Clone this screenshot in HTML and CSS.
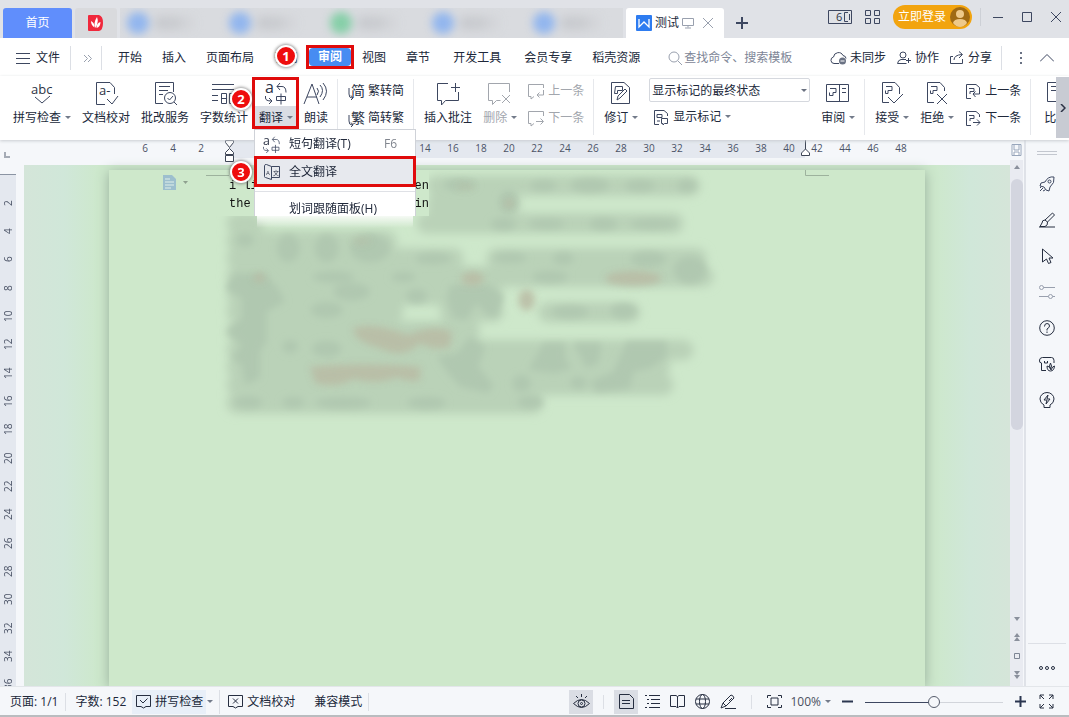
FILE: index.html
```html
<!DOCTYPE html>
<html lang="zh-CN">
<head>
    <meta charset="UTF-8">
    <meta name="viewport" content="width=device-width, initial-scale=1.0">
    <title>测试</title>
    <link rel="stylesheet" href="styles.css">
</head>
<body>
    <header class="titlebar">
        <button class="home-tab">首页</button>
        <button class="docer-tab" aria-label="稻壳">
            <svg width="16" height="16" viewBox="0 0 16 16"><path d="M1 0h10q4 1 4 8t-4 8H1q-1 0-1-1V1q0-1 1-1z" fill="#f0283c"/><path d="M7.500 13Q5 8 9 2q2 5-1.500 11zM6.500 12.500Q3 10 3 6q4 2 3.500 6.500zM8.500 13q0-5 4-6 0 5-4 6z" fill="#fff"/></svg>
        </button>
        <div class="other-tabs">
            <i class="dot"></i><i class="dot"></i><i class="dot green"></i><i class="dot"></i><i class="dot"></i>
        </div>
        <div class="doc-tab">
            <svg width="16" height="16" viewBox="0 0 16 16"><rect width="16" height="16" rx="1" fill="#2e7cf0"/><path d="M3 4v8l5-5 5 5V4" fill="none" stroke="#fff" stroke-width="1.3"/></svg>
            <span>测试</span>
            <svg class="line light" width="12" height="12" viewBox="0 0 12 12"><path d="M.5 1.500h11v7H.5zM6 8.500v2M3 11h6"/></svg>
            <button class="close-tab" aria-label="关闭"><svg class="line light" width="12" height="12" viewBox="0 0 12 12"><path d="M1 1l10 10M11 1L1 11"/></svg></button>
        </div>
        <button class="new-tab" aria-label="新建"><svg width="12" height="12" viewBox="0 0 12 12"><path d="M6 0v12M0 6h12" stroke="#3d4760" stroke-width="2"/></svg></button>
        <div class="window-tools">
            <svg class="line" width="24" height="14" viewBox="0 0 24 14"><path d="M14 .5H.5v13H14M14 .5h9.500v13H14M20 2.500h-3.500v9H20M21.500 4v6"/><text x="8" y="11" class="glyph">6</text></svg>
            <svg class="line" width="15" height="14" viewBox="0 0 15 14"><path d="M.5.5h5v5h-5zM9.500.5h5v5h-5zM.5 8.500h5v5h-5zM9.500 8.500h5v5h-5z"/></svg>
            <button class="login">立即登录
                <svg width="20" height="20" viewBox="0 0 20 20"><circle cx="10" cy="10" r="10" fill="#a06a14"/><circle cx="10" cy="7" r="4" fill="#eec98a"/><path d="M3 16q1-4 7-4t7 4q-3 4-7 4t-7-4z" fill="#eec98a"/></svg>
            </button>
            <i class="rule"></i>
            <button aria-label="最小化"><svg class="line" width="12" height="12" viewBox="0 0 12 12"><path d="M1 6.500h10"/></svg></button>
            <button aria-label="最大化"><svg class="line" width="12" height="12" viewBox="0 0 12 12"><path d="M1.500 1.500h9v9h-9z"/></svg></button>
            <button aria-label="关闭窗口"><svg class="line" width="12" height="12" viewBox="0 0 12 12"><path d="M1 1l10 10M11 1L1 11"/></svg></button>
        </div>
    </header>

    <nav class="menubar">
        <button class="file"><svg class="line" width="14" height="11" viewBox="0 0 14 11"><path d="M0 .5h14M0 5.500h14M0 10.500h14"/></svg>文件</button>
        <button class="more" aria-label="更多"><svg class="line light" width="9" height="9" viewBox="0 0 9 9"><path d="M1 1l3.500 3.500L1 8M5 1l3.500 3.500L5 8"/></svg></button>
        <div class="tabs">
            <button>开始</button>
            <button>插入</button>
            <button>页面布局</button>
            <button class="marked">引用<b class="badge badge-1">1</b></button>
            <button class="active"><span>审阅</span></button>
            <button>视图</button>
            <button>章节</button>
            <button class="wide">开发工具</button>
            <button class="wide">会员专享</button>
            <button>稻壳资源</button>
        </div>
        <label class="search">
            <svg class="line light" width="14" height="14" viewBox="0 0 14 14"><circle cx="6" cy="6" r="5"/><path d="M10 10l4 4"/></svg>
            <input type="text" placeholder="查找命令、搜索模板" aria-label="搜索">
        </label>
        <div class="share">
            <button><svg class="line" width="17" height="14" viewBox="0 0 17 14"><path d="M9 12.500H4a3.300 3.300 0 0 1-.5-6.500 5 5 0 0 1 9.500-1.500q3 .5 3 3"/><circle cx="12.500" cy="10" r="3.500" fill="#6a7284" stroke="none"/><path d="M10.500 10h4" stroke="#fff"/></svg>未同步</button>
            <button><svg class="line" width="15" height="14" viewBox="0 0 15 14"><circle cx="6" cy="4" r="3"/><path d="M9 8.500H4Q1 9 .5 12.500h9M9 9.500h5M11.500 7v5"/></svg>协作</button>
            <button><svg class="line" width="15" height="14" viewBox="0 0 15 14"><path d="M3 5.500H.5v7h12V8M4 9q0-5 8-5.500M9 .5l3.500 3L9 7"/></svg>分享</button>
            <i class="rule"></i>
            <button aria-label="选项"><svg width="4" height="12" viewBox="0 0 4 12" fill="#6a7284"><path d="M1 0h2v2H1zM1 5h2v2H1zM1 10h2v2H1z"/></svg></button>
            <button aria-label="折叠"><svg class="line" width="14" height="8" viewBox="0 0 14 8"><path d="M0 7.500l7-7 7 7"/></svg></button>
        </div>
    </nav>

    <section class="ribbon">
        <div class="tools">
            <button class="tool"><svg class="line" width="28" height="26" viewBox="0 0 28 26"><text x="3" y="14" class="glyph abc">abc</text><path d="M7 17l7 6 8-7"/></svg><span class="drop">拼写检查</span></button>
            <button class="tool"><svg class="line" width="28" height="26" viewBox="0 0 28 26"><path d="M13 24.500H4.500v-22H18l4.500 5V14M15 19l5 5 6-8"/><text x="7" y="15" class="glyph abc">a-</text></svg><span>文档校对</span></button>
            <button class="tool"><svg class="line" width="28" height="26" viewBox="0 0 28 26"><path d="M12 23.500H4.500v-21h18V12M8 6.500h11M8 10.500h9M8 14.500h4M16.500 18l2 2 3.500-4M23 22l3 3"/><circle cx="19" cy="18" r="5.500"/></svg><span>批改服务</span></button>
            <button class="tool"><svg class="line" width="28" height="26" viewBox="0 0 28 26"><path d="M2 4.500h22M2 9.500h22M2 15.500h6M2 20.500h6M11.500 13.500h5v10h-5zM11.500 18.500h5M19.500 13.500h6v10h-6zM19.500 18.500h6"/></svg><span>字数统计</span></button>
            <div class="translate">
                <button class="tool"><svg class="line" width="28" height="26" viewBox="0 0 28 26"><use href="#trans"/></svg><span class="drop">翻译</span></button>
                <i class="frame"></i>
                <b class="badge badge-2">2</b>
                <div class="dropdown">
                    <button><svg class="line" width="18" height="17" viewBox="3 2 23 22"><use href="#trans" width="28" height="26"/></svg><span>短句翻译(T)</span><kbd>F6</kbd></button>
                    <button class="current"><svg class="line" width="16" height="16" viewBox="0 0 16 16"><path d="M7.500 2.500l-5-2q-2 0-2 1v11q0 1 1 1l6 2zM7.500 2.500h8v11h-8"/><text x="2" y="11" class="glyph tiny">A</text><text x="9" y="11" class="glyph tiny">文</text></svg><span>全文翻译</span></button>
                    <hr>
                    <button><span>划词跟随面板(H)</span></button>
                    <b class="badge badge-3">3</b>
                </div>
            </div>
            <button class="tool"><svg class="line" width="28" height="26" viewBox="0 0 28 26"><path d="M2 24L10 4l7 20M5 17h10M15 8q3 3 0 7M18 5q5 5 0 12M21 3q7 8 0 17"/></svg><span>朗读</span></button>
            <i class="rule"></i>
            <div class="stack">
                <button><svg class="line" width="17" height="17" viewBox="0 0 17 17"><text x="3" y="13" class="glyph han">简</text><path d="M1 5v6q0 4 3 4M3 12.500l2 2.500-2 2"/></svg>繁转简</button>
                <button><svg class="line" width="17" height="17" viewBox="0 0 17 17"><text x="3" y="13" class="glyph han">繁</text><path d="M1 5v6q0 4 3 4M3 12.500l2 2.500-2 2"/></svg>简转繁</button>
            </div>
            <i class="rule"></i>
            <button class="tool"><svg class="line" width="28" height="26" viewBox="0 0 28 26"><path d="M14 3.500H3.500v17h4V25l4-4.500h13V12M17 7.500h9M21.500 3v9"/></svg><span>插入批注</span></button>
            <button class="tool off"><svg class="line" width="28" height="26" viewBox="0 0 28 26"><path d="M23.500 12V3.500h-21v17h4v4l4-4h4M16 15l8 8M24 15l-8 8"/></svg><span class="drop">删除</span></button>
            <div class="stack off">
                <button><svg class="line" width="17" height="17" viewBox="0 0 17 17"><path d="M15.500 5V1.500H.5v12H3V16l3-2.500M15.500 7v5H9M11.500 9.500L9 12l2.500 2.500"/></svg>上一条</button>
                <button><svg class="line" width="17" height="17" viewBox="0 0 17 17"><path d="M15.500 6V1.500H.5v12H3V16l3-2.500M8 11.500h7M12.500 8.500l3 3-3 3"/></svg>下一条</button>
            </div>
            <i class="rule"></i>
            <button class="tool"><svg class="line" width="28" height="26" viewBox="0 0 28 26"><path d="M4.500 2.500H17l5.500 5v16h-18zM8.500 6.500h7v4h-5v3h-3zM10 20l1-4 7-7 2 2-7 7z"/></svg><span class="drop">修订</span></button>
            <div class="stack view">
                <div class="select-wrap">
                    <select aria-label="显示状态"><option>显示标记的最终状态</option></select>
                </div>
                <button><svg class="line" width="17" height="17" viewBox="0 0 17 17"><path d="M6 15.500H1.500v-14H11l3.500 3V7M4 5.500h5v3H4zM4 12h3M8.500 9.500h6v5h-3L10 16v-1.500H8.500z"/></svg><span class="drop">显示标记</span></button>
            </div>
            <button class="tool"><svg class="line" width="28" height="26" viewBox="0 0 28 26"><path d="M2.500 4.500h22v17h-22zM15.500 4.500v17M6 8.500h6v4H9v3H5.500v-3M18 8.500h4M18 12.500h4"/></svg><span class="drop">审阅</span></button>
            <i class="rule"></i>
            <button class="tool"><svg class="line" width="28" height="26" viewBox="0 0 28 26"><path d="M11 22.500H4.500v-20H17l4.500 5V14M8 6.500h6v4h-4v3H7.500v-3M10 17l6 6 9-9"/></svg><span class="drop">接受</span></button>
            <button class="tool"><svg class="line" width="28" height="26" viewBox="0 0 28 26"><path d="M11 22.500H4.500v-20H17l4.500 5V11M8 6.500h6v4h-4v3H7.500v-3M14 14l10 10M24 14L14 24"/></svg><span class="drop">拒绝</span></button>
            <div class="stack">
                <button><svg class="line" width="17" height="17" viewBox="0 0 17 17"><path d="M6 15.500H1.500v-14H11l3.500 3V11H8M10.500 8.500L8 11l2.500 3M4 5.500h5v3H5V11"/></svg>上一条</button>
                <button><svg class="line" width="17" height="17" viewBox="0 0 17 17"><path d="M6 15.500H1.500v-14H11l3.500 3V7M4 5.500h5v3H5V11M8 12.500h7M12 9.500l3 3-3 3"/></svg>下一条</button>
            </div>
            <i class="rule"></i>
            <button class="tool last-tool"><svg class="line" width="28" height="26" viewBox="0 0 28 26"><path d="M24 21.500H.5v-19H24M4 6.500h10M4 10.500h10"/></svg><span class="drop">比较</span></button>
        </div>
        <button class="scroll-right" aria-label="向右滚动"><svg width="6" height="8" viewBox="0 0 6 8"><path d="M1 0l4 4-4 4" fill="none" stroke="#2b3245" stroke-width="1.500"/></svg></button>
    </section>

    <main class="workspace">
        <div class="v-ruler">
            <div class="corner"><svg width="6" height="6" viewBox="0 0 6 6"><path d="M1 0v5h5" fill="none" stroke="#a5abb5" stroke-width="2"/></svg></div>
            <div class="v-numbers">
                <span>2</span><span>4</span><span>6</span><span>8</span><span>10</span><span>12</span><span>14</span><span>16</span><span>18</span><span>20</span><span>22</span><span>24</span><span>26</span><span>28</span><span>30</span><span>32</span><span>34</span><span>36</span>
            </div>
        </div>
        <div class="editor">
            <div class="h-ruler">
                <span>6</span><span>4</span><span>2</span><span></span><span>2</span><span>4</span><span>6</span><span>8</span><span>10</span><span>12</span><span>14</span><span>16</span><span>18</span><span>20</span><span>22</span><span>24</span><span>26</span><span>28</span><span>30</span><span>32</span><span>34</span><span>36</span><span>38</span><span>40</span><span>42</span><span>44</span><span>46</span><span>48</span>
                <svg class="indent first" width="11" height="22" viewBox="0 0 11 22"><path d="M1.500.5h8v2l-4 5-4-5zM5.500 8.500l4 4v2h-8v-2zM1.500 15.500h8v6h-8z"/></svg>
                <svg class="indent last" width="11" height="16" viewBox="0 0 11 16"><path d="M5.500 0v9l-4 4v2.500h8V13l-4-4"/></svg>
            </div>
            <div class="canvas">
                <article class="page">
                    <svg class="smudge" width="816" height="260" viewBox="0 0 816 260">
                        <defs>
                            <filter id="soft" x="-10%" y="-10%" width="120%" height="120%"><feGaussianBlur stdDeviation="14"/></filter>
                            <filter id="fine" x="-10%" y="-10%" width="120%" height="120%"><feGaussianBlur stdDeviation="11"/></filter>
                            <clipPath id="below"><path d="M627 0H1600V780H-60V138H627z"/></clipPath>
                        </defs>
                        <path d="M97 5.500h23M696.500 0v5.500H720" fill="none" stroke="#9db29d"/>
                        <path d="M54 5h9l4 4v11H54z" fill="#9dbfce"/>
                        <path d="M56 9h5M56 12h9M56 15h9M56 18h6" stroke="#e2f1ea"/>
                        <path d="M74 11h5l-2.500 3z" fill="#8fa08f"/>
                        <g transform="translate(111 0) scale(.3333)" clip-path="url(#below)">
                            <g filter="url(#soft)" fill="none" stroke="#bad2b8" stroke-width="62" stroke-linecap="round">
                                <path d="M650 47H1410M650 103H870M620 160H1360M50 160H100M50 213H500M50 265H700M830 265H1430M50 320H1450M50 375H820M50 425H520M690 425H820M985 427H1230M50 483H750M50 540H1390M50 592H1320M50 645H1330M50 700H940"/>
                            </g>
                            <g filter="url(#fine)" fill="#b0c8b0">
                                <ellipse cx="720" cy="45" rx="50" ry="18"/><ellipse cx="970" cy="47" rx="40" ry="15"/><ellipse cx="1110" cy="46" rx="58" ry="20"/><ellipse cx="1260" cy="47" rx="45" ry="16"/><ellipse cx="1400" cy="47" rx="28" ry="18"/>
                                <ellipse cx="865" cy="95" rx="28" ry="34"/><ellipse cx="850" cy="162" rx="38" ry="18"/><ellipse cx="980" cy="162" rx="55" ry="14"/><ellipse cx="1150" cy="162" rx="42" ry="17"/><ellipse cx="1300" cy="162" rx="70" ry="14"/>
                                <ellipse cx="75" cy="210" rx="26" ry="20"/><ellipse cx="205" cy="235" rx="34" ry="42"/><ellipse cx="320" cy="235" rx="36" ry="42"/><ellipse cx="450" cy="235" rx="60" ry="42"/>
                                <ellipse cx="640" cy="266" rx="54" ry="17"/><ellipse cx="870" cy="264" rx="50" ry="15"/><ellipse cx="1030" cy="266" rx="32" ry="18"/><ellipse cx="1285" cy="268" rx="54" ry="22"/><ellipse cx="1410" cy="300" rx="48" ry="40"/>
                                <path d="M45 310h90l40 45 20 40-55 30v90l-20 30v80l-45 20-10-60-30-20 30-40-45-40 45-40v-60l-50-30z"/>
                                <ellipse cx="340" cy="321" rx="62" ry="18"/><ellipse cx="550" cy="321" rx="36" ry="16"/><ellipse cx="395" cy="365" rx="55" ry="27"/><ellipse cx="320" cy="420" rx="48" ry="24"/><ellipse cx="590" cy="378" rx="32" ry="22"/><ellipse cx="990" cy="320" rx="54" ry="18"/>
                                <path d="M690 345h120l40 35-20 60-30-5-30-35-30 50-40-5-20-60z"/>
                                <ellipse cx="1050" cy="426" rx="56" ry="18"/><ellipse cx="1210" cy="424" rx="38" ry="21"/><ellipse cx="320" cy="537" rx="44" ry="25"/><ellipse cx="210" cy="530" rx="24" ry="20"/>
                                <path d="M650 560l60-10 40-50 45 30-20 60 45 55-15 25-85-20-40-45z"/>
                                <path d="M970 520h65v45l20 30-50 15-80-10zM1060 520h85l-10 60-35 15zM1220 515h120v45l-50 35-50 10-10 50-100 10-20-30 70-30z"/>
                                <ellipse cx="905" cy="640" rx="28" ry="26"/><ellipse cx="1075" cy="638" rx="25" ry="18"/><ellipse cx="85" cy="697" rx="42" ry="18"/><ellipse cx="220" cy="697" rx="34" ry="16"/><ellipse cx="370" cy="698" rx="84" ry="17"/><ellipse cx="620" cy="698" rx="58" ry="18"/><ellipse cx="930" cy="696" rx="38" ry="18"/>
                            </g>
                            <g filter="url(#fine)" fill="#b9bba4" opacity=".85">
                                <ellipse cx="735" cy="50" rx="28" ry="9" opacity=".5"/><ellipse cx="867" cy="100" rx="14" ry="11"/><ellipse cx="425" cy="213" rx="28" ry="10" opacity=".5"/><ellipse cx="118" cy="323" rx="17" ry="13"/>
                                <ellipse cx="758" cy="326" rx="34" ry="21"/><ellipse cx="1240" cy="325" rx="84" ry="22"/><ellipse cx="920" cy="390" rx="25" ry="32"/>
                                <path d="M400 475q60-20 165 20 70-35 130-10l-5 45q-40 15-90-10-50 50-120 15-80-20-80-60z"/>
                                <path d="M270 590q160-15 330 0v40q-30 8-70-8-60 25-130 5-50 30-115 12z"/>
                            </g>
                        </g>
                    </svg>
                    <div class="text">
                        <p><span>i li</span><span>een</span></p>
                        <p><span>the</span><span>tin</span></p>
                        <p><span>i li</span><span>f&nbsp;</span></p>
                    </div>
                </article>
            </div>
        </div>
        <div class="scrollbar">
            <svg width="11" height="12" viewBox="0 0 11 12"><path d="M1 .5h9v11H1zM3 1v5h5V1M3 11V8h5v3" fill="#fff" stroke="#98a6bb"/></svg>
            <div class="track">
                <svg class="arrow" width="6" height="4" viewBox="0 0 6 4"><path d="M0 4l3-4 3 4z"/></svg>
                <div class="thumb"></div>
                <div class="jump">
                    <svg class="arrow" width="6" height="4" viewBox="0 0 6 4"><path d="M0 0l3 4 3-4z"/></svg>
                    <svg class="arrow" width="6" height="8" viewBox="0 0 6 8"><path d="M0 4l3-4 3 4zM0 8l3-4 3 4z"/></svg>
                    <svg width="6" height="6" viewBox="0 0 6 6"><path d="M.5.5h5v5h-5z" fill="none" stroke="#7d8594"/></svg>
                    <svg class="arrow" width="6" height="8" viewBox="0 0 6 8"><path d="M0 0l3 4 3-4zM0 4l3 4 3-4z"/></svg>
                </div>
            </div>
        </div>
        <aside class="sidebar">
            <i class="grip"></i>
            <button aria-label="快捷"><svg class="line" width="16" height="16" viewBox="0 0 16 16"><path d="M15 1q-6-1-9 5L2 7l-1 3 4 1 2 3 3 1 1-4q5-4 4-10zM4 12l-3 3M2 11l-1 1M6 14l-2 1"/><circle cx="10.500" cy="5.500" r="1.500"/></svg></button>
            <button aria-label="样式"><svg class="line dark" width="16" height="16" viewBox="0 0 16 16"><path d="M13.500 1l2 2-7 7-2.500-2zM6 8q-3 0-3 3l-2 3.500h5q3-1 2.500-4.500M0 15h16"/></svg></button>
            <button aria-label="选择"><svg class="line dark" width="16" height="16" viewBox="0 0 16 16"><path d="M3.500 1v13l4-3 2 4.500 2.500-1-2-4.500h4z"/></svg></button>
            <button aria-label="设置"><svg class="line light" width="16" height="16" viewBox="0 0 16 16"><circle cx="2.500" cy="3.500" r="2"/><circle cx="11.500" cy="12.500" r="2"/><path d="M4.500 3.500H16M0 12.500h9.500M13.500 12.500H16"/></svg></button>
            <button aria-label="帮助"><svg class="line dark" width="16" height="16" viewBox="0 0 16 16"><circle cx="8" cy="8" r="7.300"/><path d="M5.500 6.500q0-3 2.500-3t2.500 2.500Q10.500 7.500 8 9v1.500M8 11.500V13"/></svg></button>
            <button aria-label="稻壳商城"><svg class="line dark" width="16" height="16" viewBox="0 0 16 16"><path d="M2.500 7v7.500H7M2.500 7Q0 7 .5 4q.5-2.500 3-2.500h9q2.500 0 2.500 3V7M5.500 5v2h3V5M8 10q0 5 3.500 5t4-5q-2 0-3.500 4-1-4-4-4zM11.500 7q-2 3 0 6 2-3 0-6z"/></svg></button>
            <button aria-label="智能助手"><svg class="line dark" width="16" height="16" viewBox="0 0 16 16"><path d="M5 13q-4-2-4-6a7 6.500 0 0 1 14 0q0 4-4 6v2.500H5zM9 3L5 8h3l-1 4 4-5H8z"/></svg></button>
            <button class="dots" aria-label="更多"><svg class="line dark" width="16" height="6" viewBox="0 0 16 6"><circle cx="2" cy="3" r="1.500"/><circle cx="8" cy="3" r="1.500"/><circle cx="14" cy="3" r="1.500"/></svg></button>
        </aside>
    </main>

    <footer class="statusbar">
        <span class="cell">页面: 1/1</span>
        <span class="cell words">字数: 152</span>
        <button class="spell"><svg class="line dark" width="15" height="15" viewBox="0 0 15 15"><path d="M5 12.500H.5v-11h14v11H10L7.500 14 5 12.500M4 6l3 3 4.500-4.500"/></svg><span class="drop">拼写检查</span></button>
        <button class="proof"><svg class="line dark" width="15" height="15" viewBox="0 0 15 15"><path d="M5 12.500H.5v-11h14v11H10L7.500 14 5 12.500M5 4.500l5 5M10 4.500l-5 5"/></svg>文档校对</button>
        <span class="compat">兼容模式</span>
        <div class="views">
            <button class="on" aria-label="护眼模式"><svg class="line dark" width="17" height="17" viewBox="0 0 17 17"><path d="M.5 10.500q8-8 16 0-8 8-16 0zM8.500 1v3M3 3l2 2M14 3l-2 2"/><circle cx="8.500" cy="10.500" r="3.500"/><circle cx="8.500" cy="10.500" r="1"/></svg></button>
            <i class="rule"></i>
            <button class="on" aria-label="页面视图"><svg class="line dark" width="15" height="15" viewBox="0 0 15 15"><path d="M.5.5h10l4 4v10H.5zM3 6.500h8M3 9.500h8"/></svg></button>
            <button aria-label="大纲"><svg class="line dark" width="15" height="15" viewBox="0 0 15 15"><path d="M0 1.500h2M4 1.500h11M2 5.500h2M6 5.500h9M2 9.500h2M6 9.500h9M0 13.500h2M4 13.500h11"/></svg></button>
            <button aria-label="阅读版式"><svg class="line dark" width="15" height="15" viewBox="0 0 15 15"><path d="M6 12.500H.5v-11H6l1.500 1 1.500-1h5.500v11H9L7.500 14 6 12.500M7.500 2.500V14"/></svg></button>
            <button aria-label="Web版式"><svg class="line dark" width="15" height="15" viewBox="0 0 15 15"><circle cx="7.500" cy="7.500" r="7"/><ellipse cx="7.500" cy="7.500" rx="3" ry="7"/><path d="M1 5h13M1 10h13"/></svg></button>
            <button aria-label="写作模式"><svg class="line dark" width="17" height="15" viewBox="0 0 17 15"><path d="M1 14l2-5 8-8q2 0 3 3l-8 8zM3 9l3 3M5 14.500h11M9 7l3-3"/></svg></button>
        </div>
        <i class="rule"></i>
        <div class="zoom">
            <button aria-label="适合页面"><svg class="line dark" width="15" height="15" viewBox="0 0 15 15"><path d="M.5 4V1.500H4M11 1.500h3.500V4M.5 11v2.500H4M11 13.500h3.500V11M4 4h7v7H4z"/></svg></button>
            <button class="drop">100%</button>
            <button class="minus" aria-label="缩小"><svg width="11" height="11" viewBox="0 0 11 11"><path d="M0 5.500h11" stroke="#2b3650" stroke-width="2"/></svg></button>
            <input type="range" min="0" max="100" value="50" aria-label="缩放">
            <button aria-label="放大"><svg width="11" height="11" viewBox="0 0 11 11"><path d="M0 5.500h11M5.500 0v11" stroke="#2b3650" stroke-width="2"/></svg></button>
            <button aria-label="全屏"><svg class="line dark" width="15" height="15" viewBox="0 0 15 15"><path d="M1 5V1h4M1 1l4 4M10 1h4v4M14 1l-4 4M1 10v4h4M1 14l4-4M14 10v4h-4M14 14l-4-4"/></svg></button>
        </div>
    </footer>

    <svg width="0" height="0" class="sprite">
        <symbol id="trans" viewBox="0 0 28 26">
            <text x="3" y="13" class="glyph abc big">a</text>
            <path d="M15 6.500h5q4 0 4 6M18 3l-3 3.500 3 3.500M3.500 16v2q0 3 6 3M7 18l3 3-3 3M14.500 16.500h9v4h-9zM19 13.500v11"/>
        </symbol>
    </svg>
</body>
</html>
```
FILE: styles.css
```css
* {
    box-sizing: border-box;
}
body {
    margin: 0;
    height: 100vh;
    display: flex;
    flex-direction: column;
    overflow: hidden;
    background: #fff;
    color: #20283a;
    font: 12px/18px "Open Sans", "Noto Sans CJK SC", sans-serif;
}
button {
    display: flex;
    align-items: center;
    flex: none;
    padding: 0;
    border: 0;
    background: none;
    color: inherit;
    font: inherit;
    white-space: nowrap;
}
svg {
    display: block;
    flex: none;
}
.sprite {
    position: absolute;
}
.line {
    fill: none;
    stroke: #3d4760;
}
.line.light {
    stroke: #99a0ae;
}
.line.dark {
    stroke: #262e40;
}
.glyph {
    fill: #2b3245;
    stroke: none;
    font-size: 11px;
}
.glyph.abc {
    font-size: 13px;
}
.glyph.big {
    font-size: 16px;
}
.glyph.han {
    font-size: 14px;
}
.glyph.tiny {
    font-size: 6px;
}
.rule {
    flex: none;
    width: 1px;
    background: #dcdfe5;
}
/* small triangle after a label */
.drop::after {
    content: "";
    display: inline-block;
    margin-left: 4px;
    vertical-align: 3px;
    border: 3px solid transparent;
    border-top-color: #737b8a;
    border-bottom: 0;
}

/* title bar */
.titlebar {
    display: flex;
    flex: none;
    height: 38px;
    padding: 8px 7px 0 3px;
    background: #e0e2e7;
}
.home-tab {
    width: 69px;
    justify-content: center;
    border-radius: 3px 3px 0 0;
    background: #608efc;
    color: #fff;
}
.docer-tab {
    width: 42px;
    margin: 0 3px;
    justify-content: center;
    border-radius: 3px 3px 0 0;
    background: #d9dadd;
}
.other-tabs {
    flex: 1;
    max-width: 503px;
    display: flex;
    align-items: center;
    justify-content: space-between;
    padding: 0 68px 0 7px;
    background: #d9dbdf;
    overflow: hidden;
}
.dot {
    width: 22px;
    height: 22px;
    border-radius: 50%;
    background: #92b6ee;
    box-shadow: 24px 0 6px -4px #c3c5ca, 36px 0 6px -4px #c5c7cb, 48px 0 8px -5px #cccdd1;
    filter: blur(4px);
}
.dot.green {
    background: #86cfa8;
}
.doc-tab {
    display: flex;
    align-items: center;
    width: 98px;
    margin-left: 3px;
    padding-left: 10px;
    gap: 3px;
    border-radius: 3px 3px 0 0;
    background: #fff;
}
.close-tab {
    margin-left: 5px;
}
.new-tab {
    margin: 0 0 0 12px;
    align-self: center;
}
.window-tools {
    display: flex;
    align-items: center;
    gap: 17px;
    height: 24px;
    margin: -3px 0 0 auto;
}
.window-tools svg:nth-child(2) {
    margin-left: -4px;
}
.window-tools .login {
    height: 24px;
    margin-left: -4px;
    padding: 0 2px 0 5px;
    gap: 4px;
    border-radius: 12px;
    background: #f2a40f;
    color: #fff;
}
.window-tools .rule {
    height: 18px;
    margin: 0 -6px 0 -9px;
    background: #cdd0d6;
}

/* menu row */
.menubar {
    display: flex;
    align-items: center;
    flex: none;
    height: 38px;
    padding: 2px 15px 0 16px;
}
.file {
    gap: 6px;
    height: 24px;
    padding-right: 10px;
    border-right: 1px solid #dcdfe5;
}
.more {
    height: 24px;
    padding: 0 9px 0 12px;
    border-right: 1px solid #dcdfe5;
}
.tabs {
    display: flex;
    gap: 20px;
    margin-left: 16px;
}
.tabs .wide {
    padding-left: 3px;
}
.tabs .marked {
    position: relative;
}
.tabs .active {
    height: 24px;
    margin: -4px -12px -2px;
    border: 3px solid #e00b0b;
    color: #fff;
    font-weight: 700;
}
.active span {
    padding: 0 9px;
    border-radius: 4px;
    background: #478cf2;
}
.badge {
    position: absolute;
    z-index: 5;
    width: 22px;
    height: 22px;
    border: 2px solid #fff;
    border-radius: 50%;
    background: #ee0d0d;
    box-shadow: 0 0 3px 1px rgba(90, 90, 90, 0.6);
    color: #fff;
    font: 700 13px/18px "Open Sans", sans-serif;
    text-align: center;
}
.badge-1 {
    top: -4px;
    left: 1px;
}
.search {
    display: flex;
    align-items: center;
    flex: 1;
    min-width: 0;
    gap: 2px;
    margin-left: 28px;
}
.search input {
    width: 130px;
    padding: 0;
    border: 0;
    outline: 0;
    background: none;
    font: inherit;
}
.search input::placeholder {
    color: #7d8596;
}
.share {
    display: flex;
    align-items: center;
    gap: 11px;
}
.share button {
    gap: 3px;
}
.share .rule {
    height: 24px;
    margin: 0 6px 0 -2px;
}
.share button:last-child {
    margin-left: 6px;
}

/* ribbon */
.ribbon {
    position: relative;
    z-index: 3;
    display: flex;
    flex: none;
    height: 64px;
    background: #fff;
    box-shadow: 0 1px 3px #c9ccd1;
}
.tools {
    display: flex;
    flex: 1;
    min-width: 0;
    gap: 11px;
    padding: 4px 0 0 13px;
    overflow-x: clip;
    overflow-y: visible;
}
.tools > .rule {
    height: 56px;
    margin: -1px -1px 0 -2px;
    background: #e6e8ec;
}
.tool {
    flex-direction: column;
    align-self: flex-start;
    line-height: 24px;
}
.tool svg {
    margin: 0 -2px;
}
.last-tool {
    margin-left: 3px;
}
.off {
    color: #a2a6ad;
}
.off .line {
    stroke: #a2a6ad;
}
.stack {
    display: flex;
    flex: none;
    flex-direction: column;
    gap: 3px;
    line-height: 24px;
}
.stack button {
    height: 24px;
    gap: 3px;
    margin-top: -1px;
}
.stack button + button {
    margin-top: 0;
}
.view {
    width: 161px;
}
.view button {
    margin: 0 4px;
}
.select-wrap {
    position: relative;
    margin-top: -2px;
}
.select-wrap::after {
    content: "";
    position: absolute;
    right: 3px;
    top: 11px;
    border: 3px solid transparent;
    border-top-color: #6a7180;
    border-bottom: 0;
}
.select-wrap select {
    display: block;
    width: 100%;
    height: 24px;
    padding: 0 2px;
    border: 1px solid #d5d8de;
    border-radius: 2px;
    background: #fff;
    color: inherit;
    font: inherit;
    appearance: none;
}
.scroll-right {
    width: 13px;
    margin: 1px 0 2px;
    justify-content: center;
    background: #c8cbd3;
}
.translate {
    position: relative;
    flex: none;
}
.translate > .tool > span {
    height: 22px;
    margin: 0 -4px;
    padding: 0 4px;
    background: #dadde4;
}
.frame {
    position: absolute;
    inset: -3px -6px 11px -7px;
    border: 3px solid #e00b0b;
    pointer-events: none;
}
.badge-2 {
    top: 8px;
    left: -29px;
}
.dropdown {
    position: absolute;
    top: 49px;
    left: -5px;
    width: 162px;
    height: 87px;
    border: 1px solid #cfd2d8;
    border-bottom: 0;
    background: #fff;
}
.dropdown::after {
    content: "";
    position: absolute;
    top: 100%;
    left: 2px;
    right: 2px;
    height: 12px;
    background: linear-gradient(#f5faf4, transparent);
}
.dropdown button {
    width: 100%;
    height: 28px;
    padding: 0 18px 0 34px;
}
.dropdown svg {
    width: 18px;
    margin: 0 8px 0 -26px;
}
.dropdown kbd {
    margin-left: auto;
    color: #80858e;
    font: inherit;
}
.dropdown .current {
    width: 162px;
    height: 31px;
    margin: -2px -1px 0;
    padding-left: 32px;
    border: 3px solid #e00b0b;
    background: #e7e9ee;
}
.dropdown hr {
    margin: 4px 0 3px;
    border: 0;
    border-top: 1px solid #dfe1e6;
}
.badge-3 {
    top: 31px;
    left: -25px;
}

/* document area */
.workspace {
    display: flex;
    flex: 1;
    min-height: 0;
    background: #f5f7fa;
}
.v-ruler {
    display: flex;
    flex-direction: column;
    flex: none;
    width: 24px;
}
.corner {
    flex: none;
    width: 16px;
    height: 35px;
    padding: 12px 0 0 4px;
    border-bottom: 1px solid #8b94a3;
}
.v-numbers {
    flex: 1;
    min-height: 0;
    width: 16px;
    padding-top: 14px;
    overflow: hidden;
    background: #e4e8ef;
}
.v-numbers span {
    display: flex;
    align-items: center;
    justify-content: center;
    width: 16px;
    height: 28px;
    writing-mode: vertical-rl;
    transform: rotate(180deg);
    color: #4b5366;
    font-size: 10px;
}
.v-numbers span:nth-child(3n) {
    height: 29px;
}
.editor {
    display: flex;
    flex: 1;
    min-width: 0;
    flex-direction: column;
}
.h-ruler {
    position: relative;
    display: flex;
    flex: none;
    height: 25px;
    padding-left: 107px;
    background: linear-gradient(90deg, transparent 205px, #e4e8ef 205px, #e4e8ef 781px, transparent 781px) 0 0 / 100% 18px no-repeat;
    color: #4b5366;
    font-size: 10px;
    line-height: 16px;
    text-align: center;
}
.h-ruler span {
    flex: none;
    width: 28px;
}
.indent {
    position: absolute;
    top: 0;
    fill: #fff;
    stroke: #3d4555;
}
.first {
    left: 200px;
}
.last {
    left: 776px;
}
.canvas {
    display: flex;
    flex: 1;
    min-height: 0;
    padding: 5px 85px 0;
    background: linear-gradient(90deg, #d4e5d9, #d0e7d9 40px, #cde8cc 75px, #cde8cc calc(100% - 75px), #d0e7d9 calc(100% - 40px), #d5e5d9);
}
.page {
    display: grid;
    flex: 1;
    min-width: 0;
    align-content: start;
    background: #cee8cb;
    box-shadow: 0 2px 12px #97ae9c;
}
.smudge,
.text {
    grid-area: 1 / 1;
}
.text {
    width: 200px;
    height: 39px;
    margin: 7px 0 0 120px;
    overflow: hidden;
    color: #111;
    font: 12px/18px "Liberation Mono", monospace;
}
.text p {
    display: flex;
    justify-content: space-between;
    margin: 0;
}
.scrollbar {
    display: flex;
    flex: none;
    flex-direction: column;
    align-items: center;
    width: 16px;
    padding: 4px 1px 0 0;
    border-right: 2px solid #dfe2e8;
}
.track {
    display: flex;
    flex: 1;
    flex-direction: column;
    align-items: center;
    width: 13px;
    margin-top: 4px;
    padding: 5px 0 7px;
    background: #e9ebf1;
}
.arrow {
    fill: #8a909c;
}
.thumb {
    width: 12px;
    height: 50%;
    max-height: 251px;
    margin-top: 10px;
    flex: 1;
    border-radius: 6px;
    background: #d3d5df;
}
.jump {
    display: flex;
    flex-direction: column;
    align-items: center;
    gap: 12px;
    margin-top: auto;
}
.sidebar {
    display: flex;
    flex: none;
    flex-direction: column;
    align-items: center;
    width: 43px;
    padding: 11px 2px 0 0;
    gap: 20px;
}
.sidebar > button:nth-child(2) {
    margin-top: 1px;
}
.grip {
    width: 20px;
    height: 4px;
    border: 1px solid #c3c7cf;
    border-width: 1px 0;
}
.dots {
    width: 38px;
    height: 43px;
    margin-top: auto;
    padding-top: 6px;
    justify-content: center;
    border-top: 1px solid #dde0e6;
}

/* status bar */
.statusbar {
    display: flex;
    align-items: center;
    flex: none;
    height: 31px;
    padding: 1px 15px 0 10px;
    border-top: 1px solid #e3e6ea;
    border-bottom: 2px solid #b9bcbf;
    background: #f5f7fa;
}
.cell {
    padding-right: 7px;
    border-right: 1px solid #dcdfe5;
    white-space: nowrap;
}
.words {
    padding: 0 6px 0 9px;
    border: 0;
}
.spell {
    gap: 4px;
    height: 24px;
    padding: 0 6px 0 4px;
    background: linear-gradient(90deg, #e8eff8 74px, transparent 74px);
    border-right: 1px solid #dcdfe5;
}
.proof {
    gap: 4px;
    margin-left: 8px;
}
.compat {
    margin-left: 19px;
    padding-right: 6px;
    border-right: 1px solid #dcdfe5;
}
.views {
    display: flex;
    align-items: center;
    gap: 10px;
    margin-left: auto;
}
.views button {
    height: 24px;
}
.views .on {
    width: 24px;
    justify-content: center;
    background: #dadde4;
}
.views .on + button {
    margin-left: -3px;
}
.statusbar .rule {
    height: 14px;
}
.statusbar > .rule {
    margin: 0 15px 0 14px;
}
.zoom {
    display: flex;
    align-items: center;
    gap: 8px;
    color: #4a5060;
}
.zoom .minus {
    margin: 0 4px 0 3px;
}
.zoom input {
    width: 138px;
    height: 16px;
    margin: 0;
    appearance: none;
    background: linear-gradient(90deg, #3d4760 50%, #d2d5db 50%) 0 8px / 100% 1px no-repeat;
}
.zoom input::-webkit-slider-thumb {
    width: 12px;
    height: 12px;
    appearance: none;
    border: 1px solid #555c6b;
    border-radius: 50%;
    background: #f5f7fa;
}
.zoom input + button {
    margin: 0 5px 0 4px;
}
```
